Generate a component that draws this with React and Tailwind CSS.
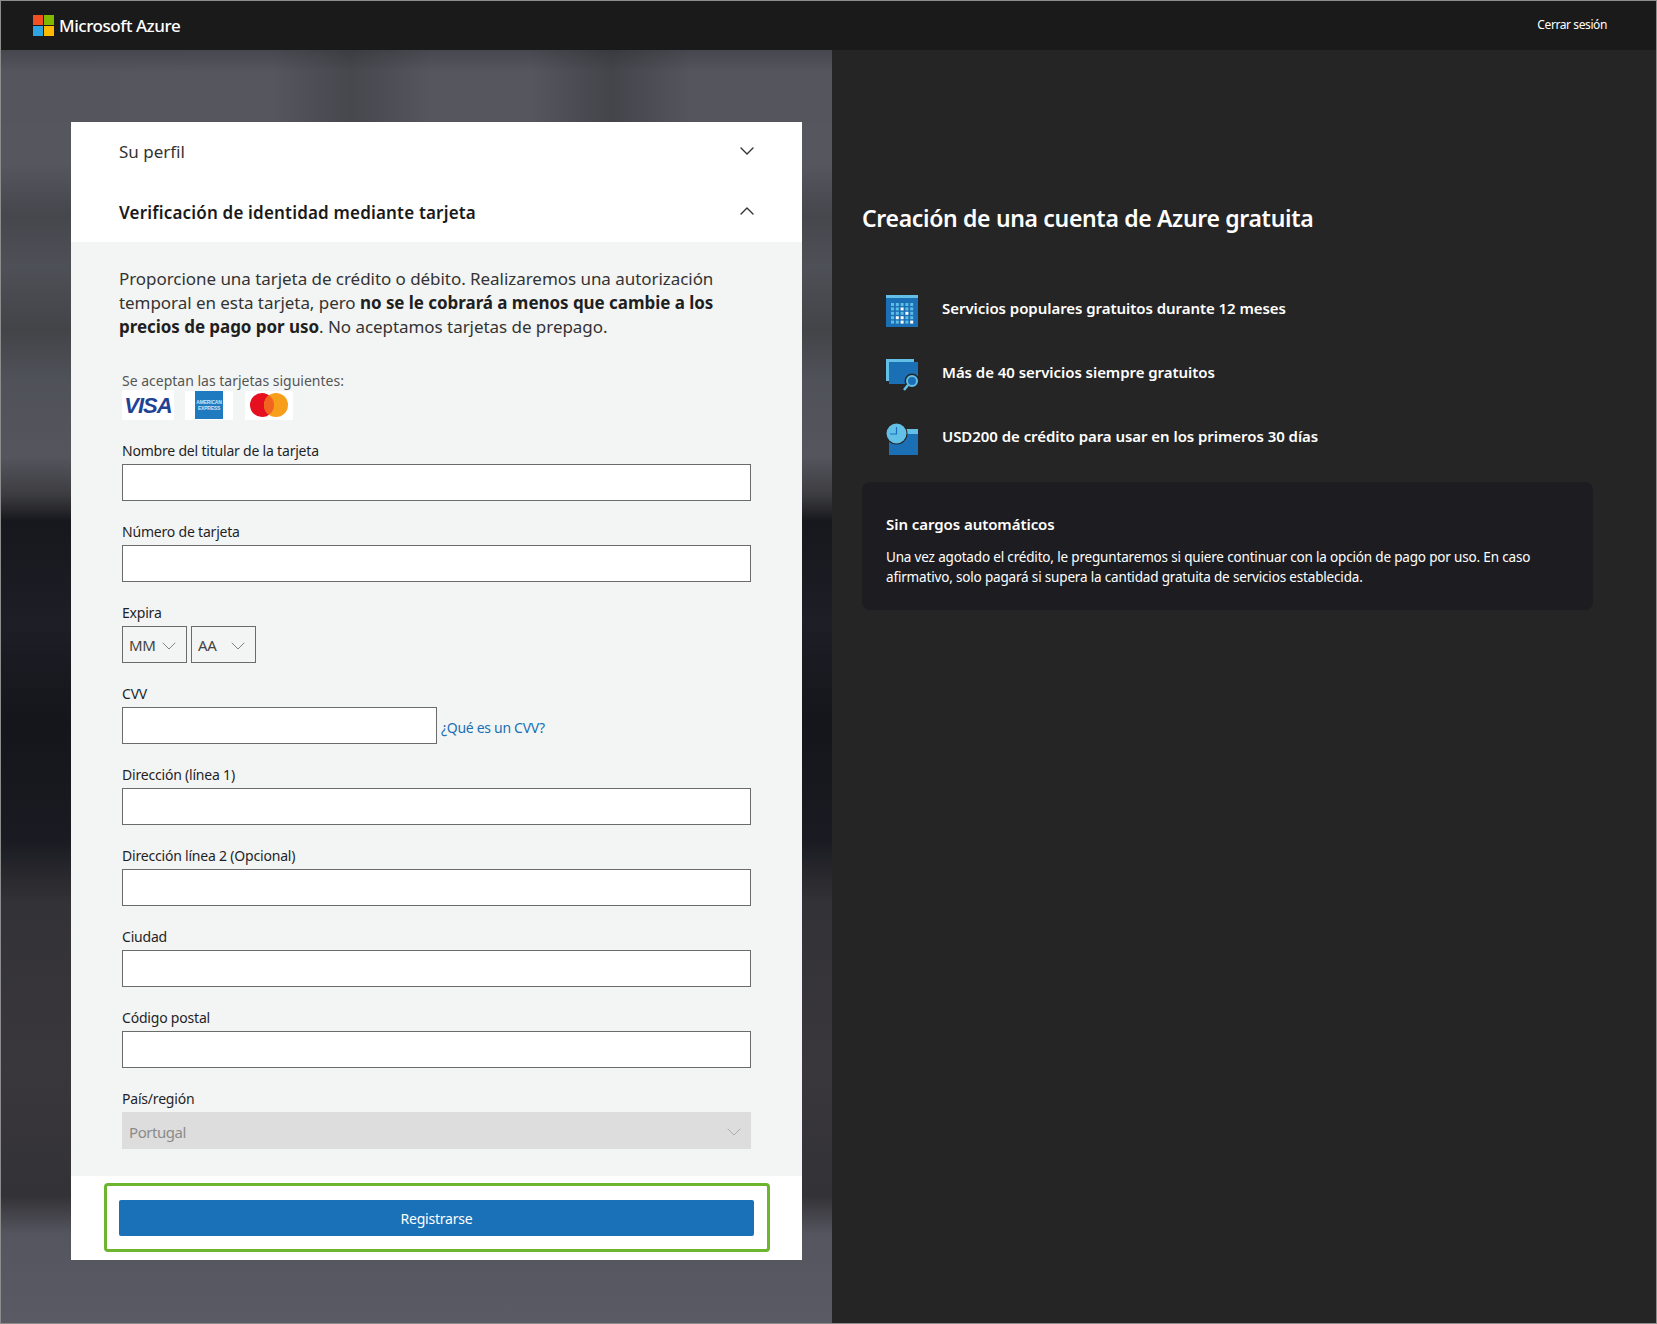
import { ChevronDown, ChevronUp } from "lucide-react";

const FONT = "font-['Noto_Sans','Open_Sans',sans-serif]";

const features = [
  { text: "Servicios populares gratuitos durante 12 meses", Icon: CalendarIcon },
  { text: "Más de 40 servicios siempre gratuitos", Icon: SearchWindowIcon },
  { text: "USD200 de crédito para usar en los primeros 30 días", Icon: ClockFolderIcon },
];

const lit = ["2-1", "3-2", "2-3", "1-3", "4-4", "2-4"];

function CalendarIcon() {
  return (
    <svg width="32" height="32" viewBox="0 0 32 32">
      <rect x="0" y="0" width="32" height="32" fill="#1a6fb5" />
      <rect x="0" y="0" width="32" height="3" fill="#62c0e6" />
      {[0, 1, 2, 3, 4].map((row) =>
        [0, 1, 2, 3, 4].map((col) => (
          <rect
            key={`${row}-${col}`}
            x={5 + col * 4.8}
            y={8 + row * 4.4}
            width="3"
            height="3"
            fill={lit.includes(`${col}-${row}`) ? "#ffffff" : "#5cbde5"}
          />
        )),
      )}
    </svg>
  );
}

function SearchWindowIcon() {
  return (
    <svg width="32" height="32" viewBox="0 0 32 32">
      <rect x="0" y="0" width="28" height="22" fill="#62c0e6" />
      <rect x="3" y="3" width="29" height="22" fill="#1a6fb5" />
      <circle cx="26" cy="22" r="7.5" fill="#252525" />
      <circle cx="26" cy="22" r="5" fill="#1a6fb5" stroke="#62c0e6" strokeWidth="2" />
      <path d="M22 26 L18 31" stroke="#62c0e6" strokeWidth="2.5" />
    </svg>
  );
}

function ClockFolderIcon() {
  return (
    <svg width="32" height="32" viewBox="0 0 32 32">
      <rect x="3" y="6" width="29" height="26" fill="#1a6fb5" />
      <rect x="12" y="6" width="20" height="5" fill="#62c0e6" />
      <circle cx="10.5" cy="10.5" r="11" fill="#252525" />
      <circle cx="10.5" cy="10.5" r="10" fill="#62c0e6" />
      <path d="M10.5 4 V11 H4" fill="none" stroke="#1a6fb5" strokeWidth="1.2" />
    </svg>
  );
}

function Field({ label, children }) {
  return (
    <div className="pt-5">
      <div className="h-6 text-[14px] leading-[21px] tracking-[-0.2px] text-[#1f1f28]">{label}</div>
      {children}
    </div>
  );
}

function TextInput({ className = "w-[629px]" }) {
  return <div className={`h-[37px] border border-[#6b6b6b] bg-white ${className}`} />;
}

function SmallSelect({ value, gap }) {
  return (
    <div className="flex h-[37px] w-[65px] items-center border border-[#6b6b6b] pl-[6px] text-[15px] tracking-[-0.3px] text-[#444]">
      <span className="pt-[2px]">{value}</span>
      <ChevronDown className={`mt-[2px] h-6 w-6 shrink-0 text-[#666] ${gap}`} strokeWidth={0.8} />
    </div>
  );
}

export default function App() {
  return (
    <div className={`flex h-[1324px] w-full flex-col border border-[#8c8c8c] bg-[#252525] ${FONT}`}>
      <header className="flex h-[49px] shrink-0 items-center justify-between bg-[#1a1a1a] pl-8 pr-[49px]">
        <div className="flex items-center">
          <div className="grid h-[21px] w-[21px] grid-cols-2 gap-px">
            <span className="bg-[#f25022]" />
            <span className="bg-[#7fba00]" />
            <span className="bg-[#2ea4e0]" />
            <span className="bg-[#ffb900]" />
          </div>
          <span className="ml-[5px] text-[17px] font-medium tracking-[-0.45px] text-white">Microsoft Azure</span>
        </div>
        <span className="mb-[2px] text-[12px] tracking-[-0.4px] text-white">Cerrar sesión</span>
      </header>

      <div className="flex flex-1">
        <div className="w-[831px] shrink-0 bg-[linear-gradient(to_bottom,rgba(0,0,0,0.16)_0,rgba(0,0,0,0)_100%),linear-gradient(to_right,#54555d_0,#55565e_270px,#47484e_350px,#55565e_430px,#55565e_530px,#44454b_610px,#54555d_690px),linear-gradient(to_bottom,#4a4a50_0%,#55565e_6%,#55565e_9%,#46474d_13%,#4e5057_17%,#434448_22%,#50525a_26%,#54555d_32%,#3c3c40_35%,#17181d_37%,#1d1e26_45%,#15161b_53%,#1a1b22_62%,#333236_67%,#39373b_80%,#333236_90%,#55555f_93%,#5a5a64_100%)] bg-[length:100%_22px,100%_72px,100%_100%] bg-no-repeat pl-[70px] pt-[72px]">
          <div className="w-[731px] bg-white">
            <div className="flex h-[60px] items-center justify-between pl-[48px] pr-[43px]">
              <span className="text-[17px] tracking-[0px] text-[#333]">Su perfil</span>
              <ChevronDown className="mb-[2px] h-6 w-6 text-[#333]" strokeWidth={1.4} />
            </div>
            <div className="flex h-[60px] items-center justify-between pl-[48px] pr-[43px]">
              <span className="pt-[2px] text-[17px] font-semibold tracking-[0.18px] text-[#1a1a1a]">
                Verificación de identidad mediante tarjeta
              </span>
              <ChevronUp className="mb-[2px] h-6 w-6 text-[#333]" strokeWidth={1.4} />
            </div>

            <div className="bg-[#f3f5f4] pb-[27px] pl-[51px] pt-[25px]">
              <p className="-ml-[3px] w-[620px] text-[17px] leading-6 tracking-[-0.05px] text-[#333]">
                Proporcione una tarjeta de crédito o débito. Realizaremos una autorización temporal en esta tarjeta, pero{" "}
                <b className="font-bold text-[#1f1f1f]">no se le cobrará a menos que cambie a los precios de pago por uso</b>
                . No aceptamos tarjetas de prepago.
              </p>

              <div className="mt-[31px] h-5 text-[14px] leading-[21px] tracking-[0px] text-[#555]">
                Se aceptan las tarjetas siguientes:
              </div>
              <div className="flex h-[30px] items-center">
                <div className="flex h-[30px] w-[52px] items-center justify-center bg-white font-['Liberation_Sans',sans-serif] text-[22px] font-bold italic tracking-[-1px] text-[#1f4294]">
                  VISA
                </div>
                <div className="ml-[11px] flex h-[29px] w-[48px] items-center justify-center bg-white">
                  <div className="flex h-[28px] w-[28px] flex-col items-center justify-center bg-[#1f7ac0] font-['Liberation_Sans',sans-serif] text-[5px] font-bold leading-[6px] tracking-[-0.2px] text-[#cfe4f5]">
                    <span>AMERICAN</span>
                    <span>EXPRESS</span>
                  </div>
                </div>
                <div className="ml-3 flex h-[29px] w-[48px] items-center justify-center bg-white">
                  <svg width="38" height="24" viewBox="0 0 38 24">
                    <circle cx="12" cy="12" r="12" fill="#e60f20" />
                    <circle cx="26" cy="12" r="12" fill="#f79e1b" />
                    <path d="M19 2.2a12 12 0 0 1 0 19.6a12 12 0 0 1 0-19.6z" fill="#f0641f" />
                  </svg>
                </div>
              </div>

              <Field label="Nombre del titular de la tarjeta">
                <TextInput />
              </Field>
              <Field label="Número de tarjeta">
                <TextInput />
              </Field>
              <Field label="Expira">
                <div className="flex gap-1">
                  <SmallSelect value="MM" gap="ml-[1px]" />
                  <SmallSelect value="AA" gap="ml-[9px]" />
                </div>
              </Field>
              <Field label="CVV">
                <div className="flex items-end">
                  <TextInput className="w-[315px]" />
                  <a className="mb-[6px] ml-1 text-[14px] leading-5 tracking-[-0.3px] text-[#1a6fb5]">¿Qué es un CVV?</a>
                </div>
              </Field>
              <Field label="Dirección (línea 1)">
                <TextInput />
              </Field>
              <Field label="Dirección línea 2 (Opcional)">
                <TextInput />
              </Field>
              <Field label="Ciudad">
                <TextInput />
              </Field>
              <Field label="Código postal">
                <TextInput />
              </Field>
              <Field label="País/región">
                <div className="flex h-[37px] w-[629px] items-center justify-between bg-[#dcdddc] pl-[7px] pr-[5px] text-[15px] tracking-[-0.45px] text-[#8b8b8b]">
                  <span className="pt-[3px]">Portugal</span>
                  <ChevronDown className="mt-[2px] h-6 w-6 text-[#a0a0a0]" strokeWidth={0.8} />
                </div>
              </Field>
            </div>

            <div className="h-[84px] pl-[33px] pt-[7px]">
              <div className="h-[69px] w-[666px] rounded-[4px] border-[3px] border-[#6db42f] pl-3 pt-[14px]">
                <button
                  type="button"
                  className="flex h-9 w-[635px] items-center justify-center rounded-[2px] bg-[#1a71b8] text-[14px] tracking-[-0.2px] text-white"
                >
                  Registrarse
                </button>
              </div>
            </div>
          </div>
        </div>

        <div className="flex-1 pl-[30px] pt-[149px] text-white">
          <h1 className="h-10 text-[23px] font-semibold leading-[38px] tracking-[-0.33px]">Creación de una cuenta de Azure gratuita</h1>
          <div className="mt-[56px] flex flex-col gap-8">
            {features.map(({ text, Icon }) => (
              <div key={text} className="flex h-8 items-center pl-6">
                <Icon />
                <span className="mb-[6px] ml-6 text-[15px] font-semibold tracking-[-0.05px]">{text}</span>
              </div>
            ))}
          </div>
          <div className="mt-[27px] h-[128px] w-[731px] rounded-lg bg-[#1d1d21] pl-6 pt-[29px]">
            <h2 className="h-[36px] text-[15px] font-semibold leading-[26px] tracking-[-0.06px]">Sin cargos automáticos</h2>
            <p className="w-[660px] text-[13.5px] leading-5 tracking-[-0.17px]">
              Una vez agotado el crédito, le preguntaremos si quiere continuar con la opción de pago por uso. En caso afirmativo, solo pagará si supera la cantidad gratuita de servicios establecida.
            </p>
          </div>
        </div>
      </div>
    </div>
  );
}
